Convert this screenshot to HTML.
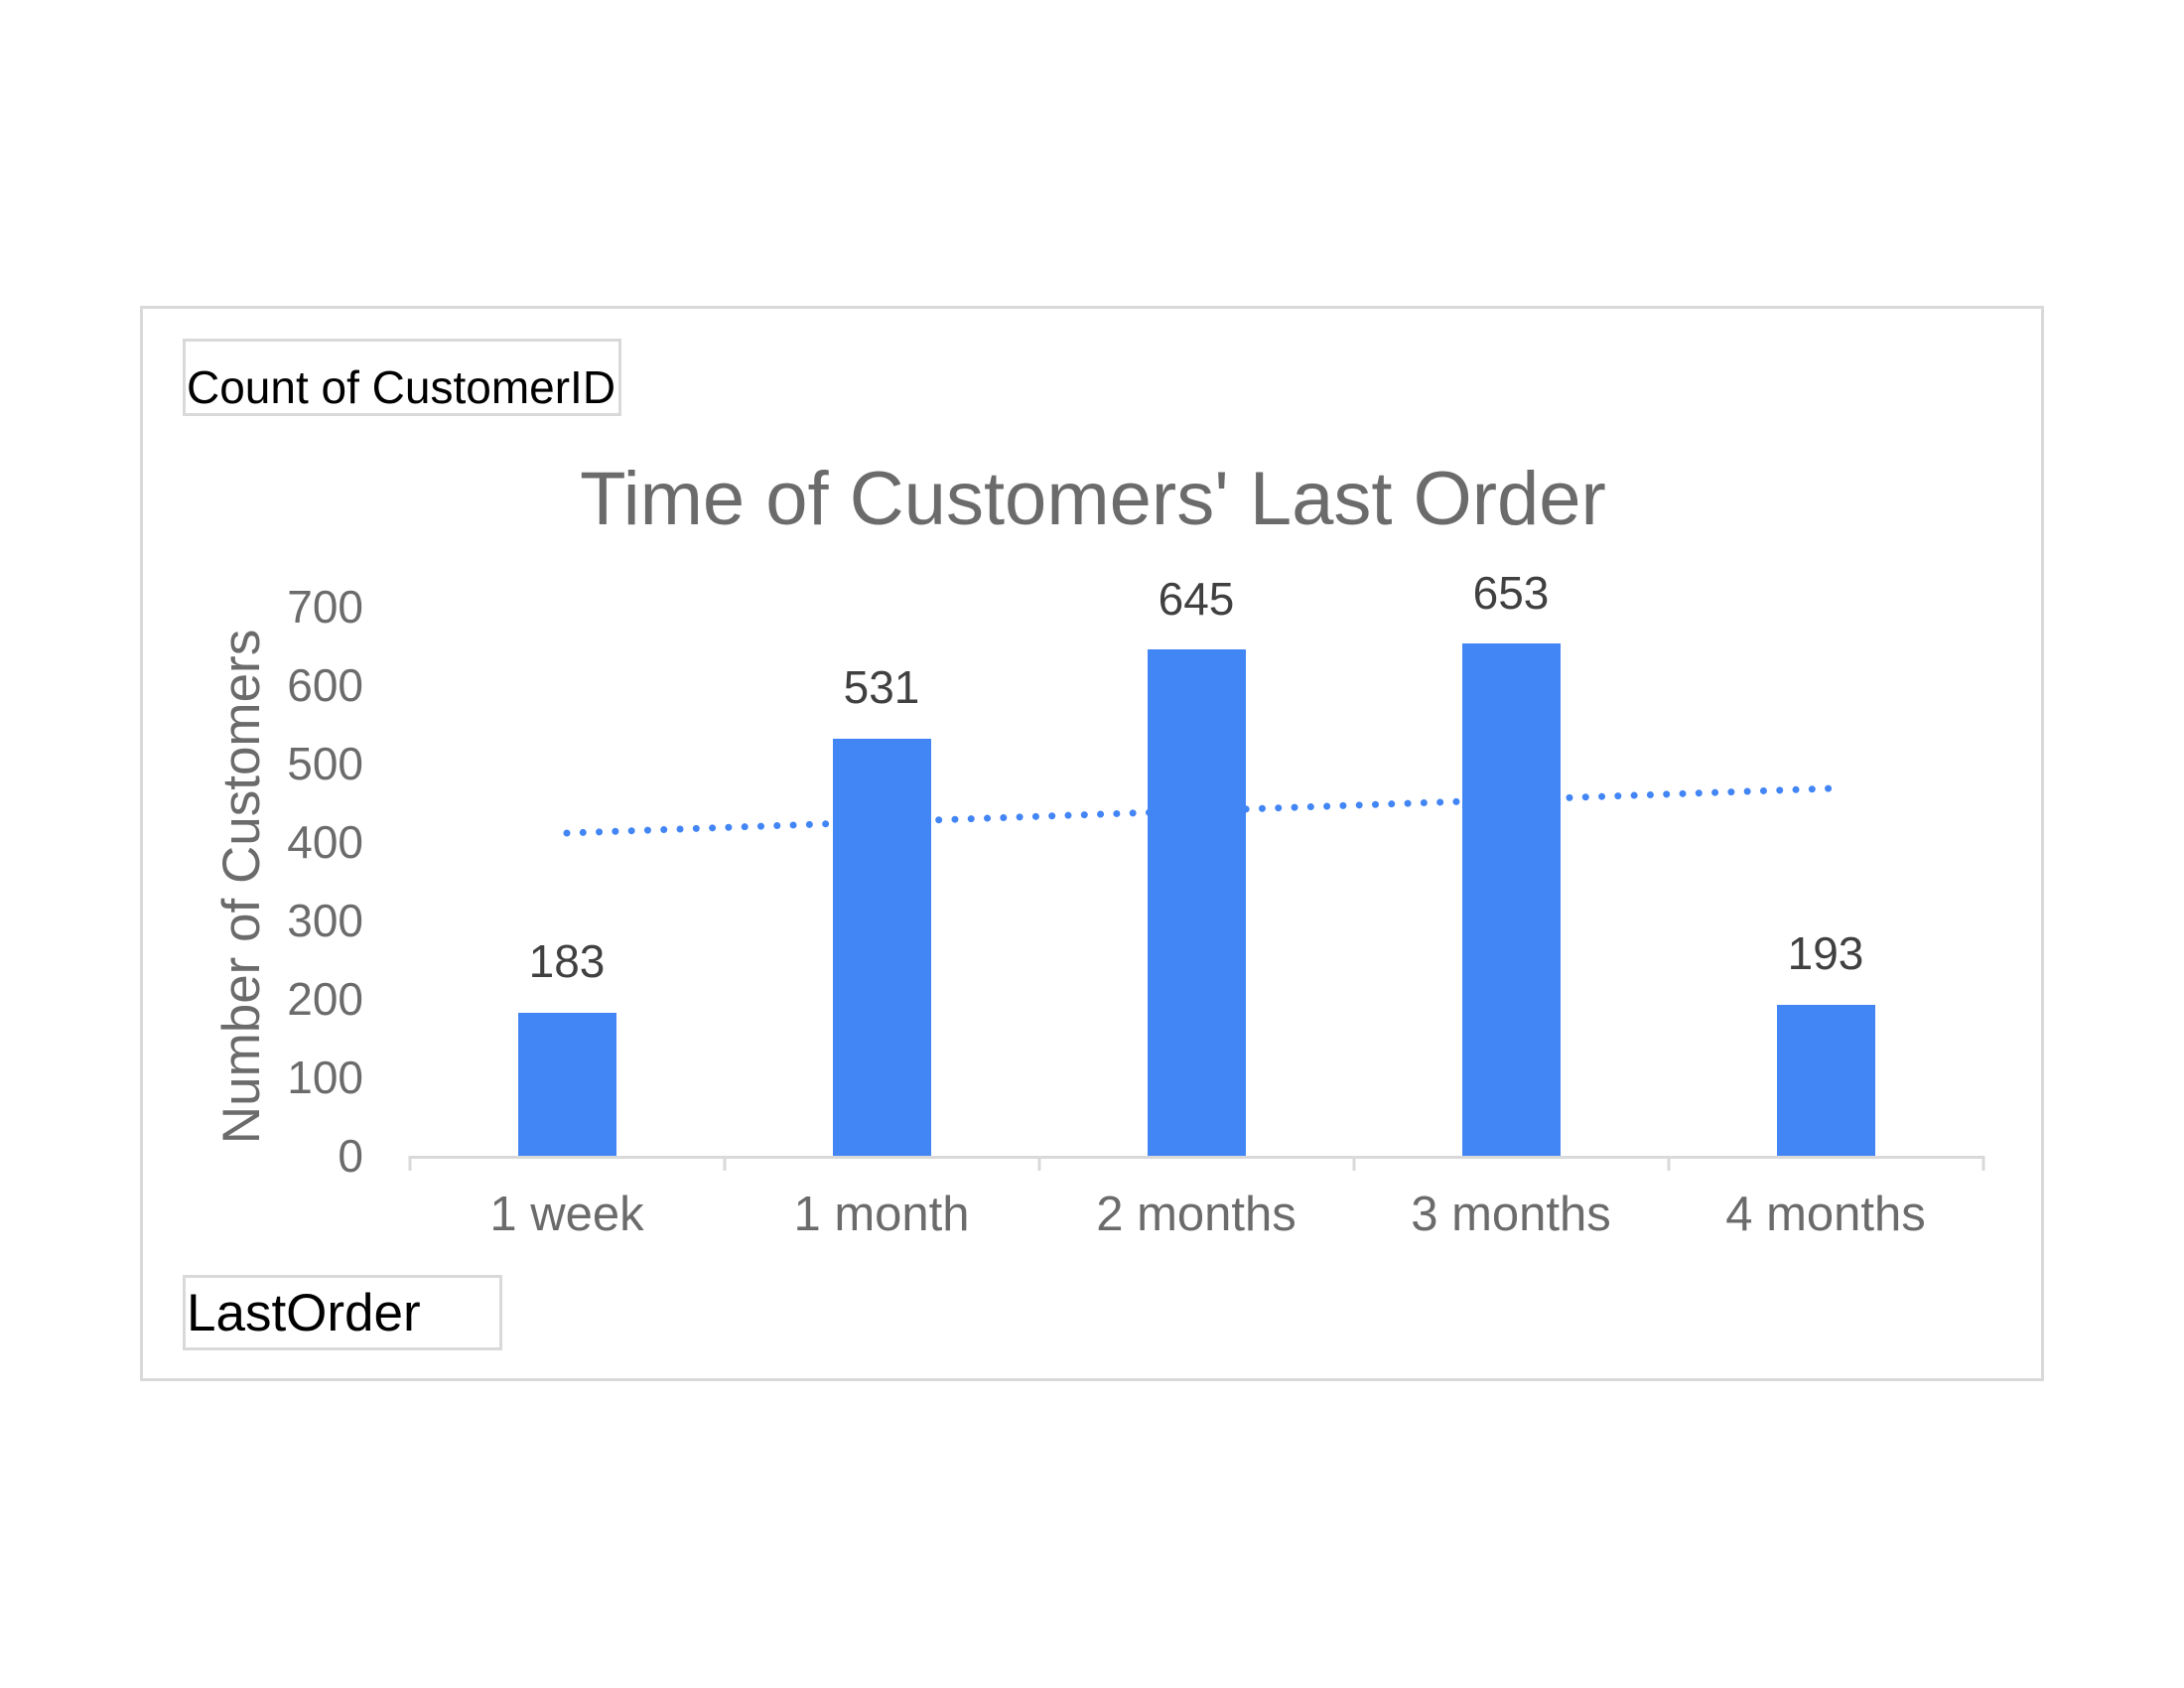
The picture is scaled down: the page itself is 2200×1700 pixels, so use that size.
<!DOCTYPE html>
<html><head><meta charset="utf-8"><style>
html,body{margin:0;padding:0;background:#fff;}
svg{display:block;}
text{font-family:"Liberation Sans",Arial,sans-serif;}
</style></head><body>
<svg width="2200" height="1700" viewBox="0 0 2200 1700" xmlns="http://www.w3.org/2000/svg">
<rect x="142.5" y="309.5" width="1915" height="1080" fill="#fff" stroke="#d9d9d9" stroke-width="3"/>
<rect x="185.5" y="342.5" width="439" height="75" fill="#fff" stroke="#d9d9d9" stroke-width="3"/>
<text x="188" y="406" font-size="46" fill="#000">Count of CustomerID</text>
<text x="1101" y="528" font-size="76" fill="#6b6b6b" text-anchor="middle">Time of Customers' Last Order</text>
<g font-size="46" fill="#6b6b6b" text-anchor="end">
<text x="366" y="1180">0</text>
<text x="366" y="1101">100</text>
<text x="366" y="1022">200</text>
<text x="366" y="943">300</text>
<text x="366" y="864">400</text>
<text x="366" y="785">500</text>
<text x="366" y="706">600</text>
<text x="366" y="627">700</text>
</g>
<text transform="translate(261,893) rotate(-90)" font-size="53" fill="#6b6b6b" text-anchor="middle">Number of Customers</text>
<g fill="#4285f4">
<rect x="522" y="1020" width="99" height="145"/>
<rect x="839" y="744" width="99" height="421"/>
<rect x="1156" y="654" width="99" height="511"/>
<rect x="1473" y="648" width="99" height="517"/>
<rect x="1790" y="1012" width="99" height="153"/>
</g>
<path d="M413 1165.5H1998M413 1164V1179M730 1164V1179M1047 1164V1179M1364 1164V1179M1681 1164V1179M1998 1164V1179" stroke="#d9d9d9" stroke-width="3" fill="none"/>
<line x1="571" y1="839" x2="1846" y2="794" stroke="#4285f4" stroke-width="7" stroke-linecap="round" stroke-dasharray="0 16.3"/>
<g font-size="46" fill="#404040" text-anchor="middle">
<text x="571" y="984">183</text>
<text x="888" y="708">531</text>
<text x="1205" y="619">645</text>
<text x="1522" y="613">653</text>
<text x="1839" y="976">193</text>
</g>
<g font-size="49" fill="#6b6b6b" text-anchor="middle">
<text x="571" y="1239">1 week</text>
<text x="888" y="1239">1 month</text>
<text x="1205" y="1239">2 months</text>
<text x="1522" y="1239">3 months</text>
<text x="1839" y="1239">4 months</text>
</g>
<rect x="185.5" y="1285.5" width="319" height="73" fill="#fff" stroke="#d9d9d9" stroke-width="3"/>
<text x="188" y="1340" font-size="53" fill="#000">LastOrder</text>
</svg>
</body></html>
